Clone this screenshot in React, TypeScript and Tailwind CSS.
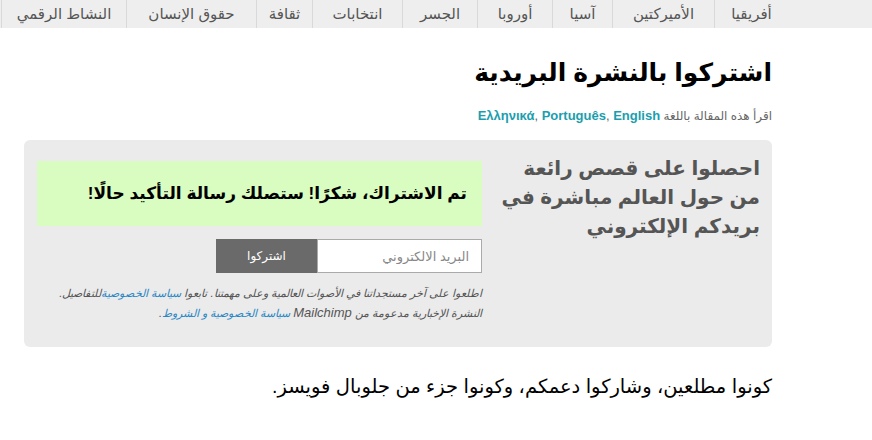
import { FC } from 'react'

const NAV_ITEMS: { label: string; width: string }[] = [
  { label: 'أفريقيا', width: 'w-[74px]' },
  { label: 'الأميركتين', width: 'w-[102px]' },
  { label: 'آسيا', width: 'w-[60px]' },
  { label: 'أوروبا', width: 'w-[75px]' },
  { label: 'الجسر', width: 'w-[75px]' },
  { label: 'انتخابات', width: 'w-[90px]' },
  { label: 'ثقافة', width: 'w-[56px]' },
  { label: 'حقوق الإنسان', width: 'w-[130px]' },
  { label: 'النشاط الرقمي', width: 'w-[125px]' },
]

// shown left to right, as in the original
const LANGUAGES = ['Ελληνικά', 'Português', 'English']

const App: FC = () => {
  return (
    <div dir="rtl" className="min-h-screen bg-white font-['Liberation_Sans','DejaVu_Sans',sans-serif] text-black">
      <nav className="flex h-[28px] bg-[#eeeeee] pr-[84px]">
        {NAV_ITEMS.map(item => (
          <a
            key={item.label}
            href="#"
            className={`${item.width} flex items-center justify-center border-l border-[#d9d9d9] text-[15px] text-[#555555]`}>
            {item.label}
          </a>
        ))}
      </nav>

      <main className="pl-[24px] pr-[100px]">
        <h1 className="mt-[27px] text-[25px] leading-[34px] font-bold">اشتركوا بالنشرة البريدية</h1>

        <p className="mt-[18px] text-[12px] leading-[18px] text-[#666666]">
          اقرأ هذه المقالة باللغة{' '}
          <span dir="ltr" className="inline-block text-[13px]">
            {LANGUAGES.map((lang, i) => (
              <span key={lang}>
                <a href="#" className="font-bold text-[#1a9eae]">
                  {lang}
                </a>
                {i < LANGUAGES.length - 1 && ', '}
              </span>
            ))}
          </span>
        </p>

        <section className="mt-[15px] flex gap-[18px] rounded-[6px] bg-[#ebebeb] pl-[13px] pr-[12px] pt-[14px] pb-[24px]">
          <h2 className="w-[260px] shrink-0 whitespace-nowrap text-[20px] leading-[29px] font-bold text-[#555555]">
            احصلوا على قصص رائعة
            <br />
            من حول العالم مباشرة في
            <br />
            بريدكم الإلكتروني
          </h2>

          <div className="flex w-[445px] flex-col pt-[7px]">
            <div className="flex h-[65px] items-center bg-[#d9fcc0] pr-[15px]">
              <p className="text-[17px] font-bold">تم الاشتراك، شكرًا! ستصلك رسالة التأكيد حالًا!</p>
            </div>

            <form className="mt-[13px] flex" onSubmit={e => e.preventDefault()}>
              <input
                type="email"
                placeholder="البريد الالكتروني"
                className="h-[34px] w-[165px] border border-[#aaaaaa] bg-white px-[12px] text-[13px] text-[#555555] placeholder:text-[#888888] outline-none"
              />
              <button type="submit" className="h-[34px] w-[101px] bg-[#6a6a6a] text-[12px] text-white">
                اشتركوا
              </button>
            </form>

            <div className="mt-[10px] text-[11px] leading-[20px] italic text-[#555555]">
              <p>
                اطلعوا على آخر مستجداتنا في الأصوات العالمية وعلى مهمتنا. تابعوا{' '}
                <a href="#" className="text-[#2a87c4]">
                  سياسة الخصوصية
                </a>
                للتفاصيل.
              </p>
              <p>
                النشرة الإخبارية مدعومة من <span className="text-[13px]">Mailchimp</span>{' '}
                <a href="#" className="text-[#2a87c4]">
                  سياسة الخصوصية و الشروط
                </a>
                .
              </p>
            </div>
          </div>
        </section>

        <p className="mt-[26px] text-[19.5px] leading-[26px]">كونوا مطلعين، وشاركوا دعمكم، وكونوا جزء من جلوبال فويسز.</p>
      </main>
    </div>
  )
}

export default App
